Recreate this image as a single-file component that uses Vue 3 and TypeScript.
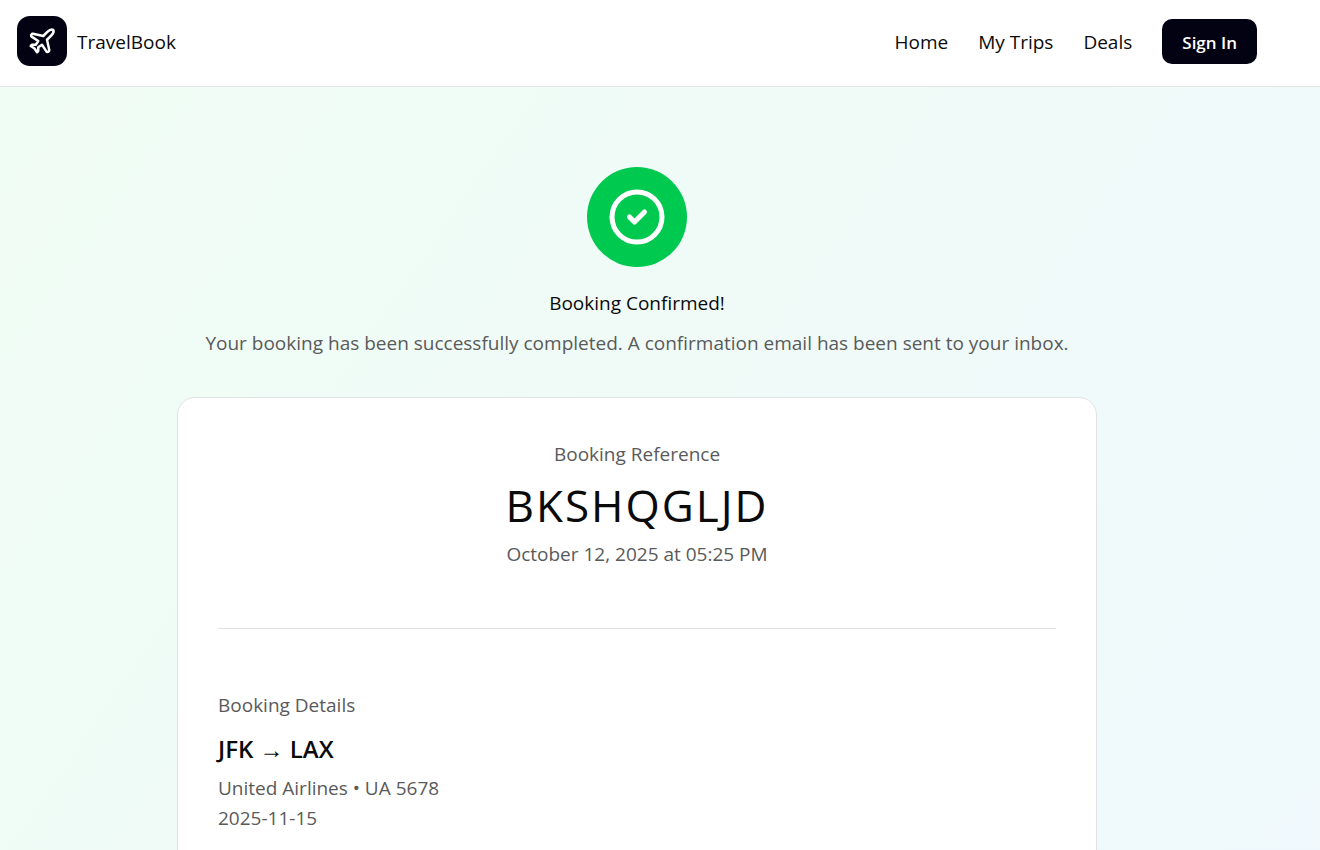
<script setup lang="ts">
interface NavLink {
  label: string
  href: string
}

interface Booking {
  reference: string
  bookedAt: string
  from: string
  to: string
  carrier: string
  date: string
}

const links: NavLink[] = [
  { label: 'Home', href: '#home' },
  { label: 'My Trips', href: '#trips' },
  { label: 'Deals', href: '#deals' },
]

const booking: Booking = {
  reference: 'BKSHQGLJD',
  bookedAt: 'October 12, 2025 at 05:25 PM',
  from: 'JFK',
  to: 'LAX',
  carrier: 'United Airlines • UA 5678',
  date: '2025-11-15',
}
</script>

<template>
  <div class="page">
    <header class="header">
      <a class="brand" href="#home">
        <span class="logo">
          <svg viewBox="0 0 24 24" width="30" height="30" fill="none" stroke="currentColor" stroke-width="2" stroke-linecap="round" stroke-linejoin="round" aria-hidden="true">
            <path d="M17.8 19.2 16 11l3.5-3.5C21 6 21.5 4 21 3c-1-.5-3 0-4.5 1.5L13 8 4.8 6.2c-.5-.1-.9.1-1.1.5l-.3.5c-.2.5-.1 1 .3 1.3L9 12l-2 3H4l-1 1 3 2 2 3 1-1v-3l3-2 3.5 5.3c.3.4.8.5 1.3.3l.5-.2c.4-.3.6-.7.5-1.2z" />
          </svg>
        </span>
        <span class="name">TravelBook</span>
      </a>
      <nav class="nav" aria-label="Main">
        <a v-for="link in links" :key="link.label" class="link" :href="link.href">{{ link.label }}</a>
        <button class="signin" type="button">Sign In</button>
      </nav>
    </header>

    <main class="main">
      <section class="intro">
        <div class="badge">
          <svg viewBox="0 0 24 24" width="60" height="60" fill="none" stroke="currentColor" stroke-width="2" stroke-linecap="round" stroke-linejoin="round" aria-hidden="true">
            <circle cx="12" cy="12" r="10" />
            <path d="m9 12 2 2 4-4" />
          </svg>
        </div>
        <h1 class="title">Booking Confirmed!</h1>
        <p class="muted">Your booking has been successfully completed. A confirmation email has been sent to your inbox.</p>
      </section>

      <article class="card">
        <section class="reference">
          <p class="muted">Booking Reference</p>
          <p class="code">{{ booking.reference }}</p>
          <p class="muted">{{ booking.bookedAt }}</p>
        </section>
        <hr class="rule" />
        <section class="details">
          <h2 class="muted subtitle">Booking Details</h2>
          <h3 class="route">{{ booking.from }} → {{ booking.to }}</h3>
          <p class="muted">{{ booking.carrier }}</p>
          <p class="muted">{{ booking.date }}</p>
        </section>
      </article>
    </main>
  </div>
</template>

<style>
body {
  margin: 0;
}
</style>

<style scoped>
.page {
  display: flex;
  flex-direction: column;
  height: 100vh;
  overflow: hidden;
  box-sizing: border-box;
  font-family: "Segoe UI", "Open Sans", "Noto Sans", sans-serif;
  font-size: 19px;
  line-height: 30px;
  color: #0a0a0a;
}

.header {
  display: flex;
  align-items: center;
  justify-content: space-between;
  flex-shrink: 0;
  padding: 16px 63px 20px 17px;
  background: #fff;
  border-bottom: 1px solid #e5e5e5;
}

.brand {
  display: flex;
  align-items: center;
  gap: 10px;
  color: inherit;
  text-decoration: none;
}

.name,
.link {
  padding-top: 2px;
}

.logo {
  display: flex;
  align-items: center;
  justify-content: center;
  width: 50px;
  height: 50px;
  border-radius: 13px;
  background: #030213;
  color: #fff;
}

.nav {
  display: flex;
  align-items: center;
  gap: 30px;
}

.link {
  color: inherit;
  text-decoration: none;
}

.signin {
  height: 45px;
  padding: 2px 20px 0;
  border: 0;
  border-radius: 10px;
  background: #030213;
  color: #fff;
  font-family: inherit;
  font-size: 17px;
  font-weight: 600;
  line-height: 25px;
}

.main {
  display: flex;
  flex: 1 0 1740px;
  flex-direction: column;
  align-items: center;
  gap: 39px;
  padding: 80px 63px 80px 17px;
  background: linear-gradient(to bottom right, #f0fdf4, #eff6ff);
}

.intro {
  display: flex;
  flex-direction: column;
  align-items: center;
  text-align: center;
}

.badge {
  display: flex;
  align-items: center;
  justify-content: center;
  width: 100px;
  height: 100px;
  margin-bottom: 21px;
  border-radius: 50%;
  background: #00c950;
  color: #fff;
}

.title {
  margin: 0 0 10px;
  font-size: inherit;
  font-weight: 400;
}

.muted {
  margin: 0;
  color: #5a5a5a;
}

.card {
  box-sizing: border-box;
  width: 100%;
  max-width: 920px;
  flex: 1;
  padding: 41px 40px;
  border: 1px solid #e2e2e2;
  border-radius: 18px;
  background: #fff;
}

.reference {
  padding-bottom: 59px;
  text-align: center;
}

.code {
  margin: 11px 0 9px;
  font-size: 44px;
  line-height: 50px;
  letter-spacing: 2px;
}

.rule {
  margin: 0;
  border: 0;
  border-top: 1px solid #e2e2e2;
}

.details {
  padding-top: 61px;
}

.subtitle {
  font-size: inherit;
  font-weight: 400;
}

.route {
  margin: 10px 0 5px;
  font-size: 24px;
  font-weight: 600;
  line-height: 38px;
}
</style>
